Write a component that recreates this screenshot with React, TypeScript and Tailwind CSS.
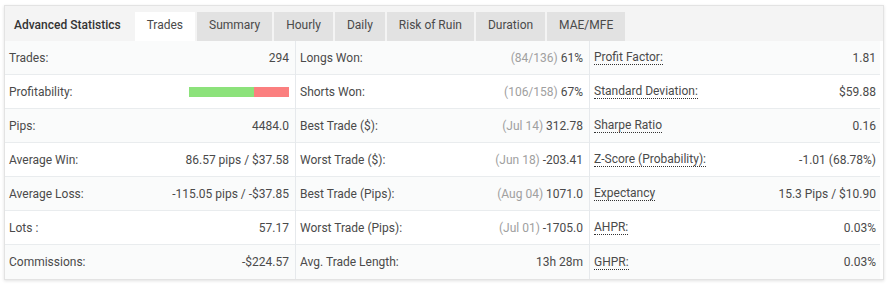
import React from 'react'

const tabs = ['Trades', 'Summary', 'Hourly', 'Daily', 'Risk of Ruin', 'Duration', 'MAE/MFE']

type Cell = { label: string; value: React.ReactNode; note?: string; dotted?: boolean }

const col1: Cell[] = [
  { label: 'Trades:', value: '294' },
  { label: 'Profitability:', value: 'bar' },
  { label: 'Pips:', value: '4484.0' },
  { label: 'Average Win:', value: '86.57 pips / $37.58' },
  { label: 'Average Loss:', value: '-115.05 pips / -$37.85' },
  { label: 'Lots :', value: '57.17' },
  { label: 'Commissions:', value: '-$224.57' },
]

const col2: Cell[] = [
  { label: 'Longs Won:', note: '(84/136)', value: '61%' },
  { label: 'Shorts Won:', note: '(106/158)', value: '67%' },
  { label: 'Best Trade ($):', note: '(Jul 14)', value: '312.78' },
  { label: 'Worst Trade ($):', note: '(Jun 18)', value: '-203.41' },
  { label: 'Best Trade (Pips):', note: '(Aug 04)', value: '1071.0' },
  { label: 'Worst Trade (Pips):', note: '(Jul 01)', value: '-1705.0' },
  { label: 'Avg. Trade Length:', value: '13h 28m' },
]

const col3: Cell[] = [
  { label: 'Profit Factor:', value: '1.81', dotted: true },
  { label: 'Standard Deviation:', value: '$59.88', dotted: true },
  { label: 'Sharpe Ratio', value: '0.16', dotted: true },
  { label: 'Z-Score (Probability):', value: '-1.01 (68.78%)', dotted: true },
  { label: 'Expectancy', value: '15.3 Pips / $10.90', dotted: true },
  { label: 'AHPR:', value: '0.03%', dotted: true },
  { label: 'GHPR:', value: '0.03%', dotted: true },
]

const Column = ({ cells, last }: { cells: Cell[]; last?: boolean }) => (
  <div className={last ? 'flex flex-col' : 'flex flex-col border-r border-[#e6e9ec]'}>
    {cells.map((c, i) => (
      <div
        key={c.label}
        className={`flex items-center justify-between h-[34px] pl-[4px] ${last ? 'pr-[4px]' : 'pr-[6px]'} ${i % 2 === 0 ? 'bg-[#fafbfb]' : 'bg-white'} ${i < cells.length - 1 ? 'border-b border-[#e9ecee]' : ''}`}
      >
        <span className={c.dotted ? 'border-b border-dotted border-[#333] leading-[14px]' : ''}>{c.label}</span>
        {c.value === 'bar' ? (
          <div className="flex w-[100px] h-[10px]">
            <div className="w-[65px] bg-[#8ce27b]" />
            <div className="flex-1 bg-[#fb7f7f]" />
          </div>
        ) : (
          <span>
            {c.note && <span className="text-[#a0a0a0]">{c.note} </span>}
            {c.value}
          </span>
        )}
      </div>
    ))}
  </div>
)

export default function App() {
  return (
    <div className="w-[889px] h-[285px] bg-white pt-[5px] pl-[4px] font-['Roboto',sans-serif] text-[12px] text-[#4a4a4a]">
      <div className="w-[880px] h-[275px] border border-[#e3e3e3] shadow-[0_1px_3px_rgba(0,0,0,0.12)] bg-white">
        <div className="flex items-end h-[35px] bg-[#f4f4f4] pl-[9px] gap-[2px]">
          <div className="h-[29px] flex items-center pb-[3px] pr-[12px] font-medium text-[#333]">Advanced Statistics</div>
          {tabs.map((t, i) => (
            <div
              key={t}
              className={`h-[29px] flex items-center pb-[3px] px-[12px] ${i === 0 ? 'bg-white' : 'bg-[#e2e2e2]'}`}
            >
              {t}
            </div>
          ))}
        </div>
        <div className="grid grid-cols-[291px_294px_290px] mr-[3px]">
          <Column cells={col1} />
          <Column cells={col2} />
          <Column cells={col3} last />
        </div>
      </div>
    </div>
  )
}
